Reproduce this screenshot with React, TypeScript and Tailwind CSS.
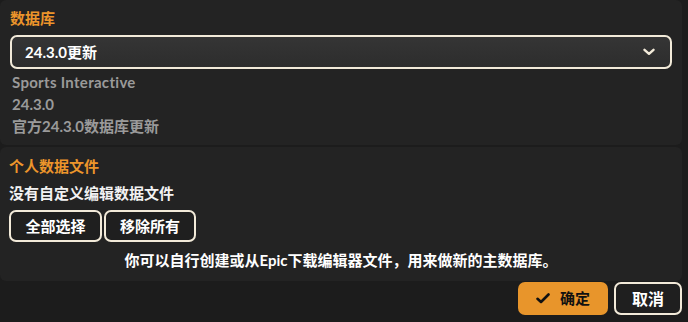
import React from "react";

const font = { fontFamily: 'Lato, "Noto Sans CJK SC", sans-serif' };

export default function App() {
  return (
    <div
      className="relative w-[688px] h-[322px] overflow-hidden bg-[#1c1c1c] flex flex-col"
      style={font}
    >
      {/* Database panel */}
      <div className="mr-[6px] h-[145px] shrink-0 rounded-[6px] bg-[#232323] px-[10px] pt-[8px]">
        <div className="text-[15px] leading-[20px] font-bold text-[#ec952b]">数据库</div>
        <div className="mt-[7px] h-[34px] rounded-[7px] border-2 border-[#f2ead9] bg-gradient-to-b from-[#353535] to-[#2d2d2d] flex items-center justify-between pl-[13px] pr-[15px]">
          <span className="text-[15px] font-bold text-white">24.3.0更新</span>
          <svg width="12" height="8" viewBox="0 0 12 8" fill="none">
            <path
              d="M1.5 1.8 L6 5.8 L10.5 1.8"
              stroke="#f2ead9"
              strokeWidth="2.4"
              strokeLinecap="round"
              strokeLinejoin="round"
            />
          </svg>
        </div>
        <div className="mt-[2px] pl-[2px] text-[15px] leading-[22px] font-bold text-[#9a9a9a]">
          <div className="tracking-[0.3px]">Sports Interactive</div>
          <div>24.3.0</div>
          <div>官方24.3.0数据库更新</div>
        </div>
      </div>

      {/* Personal files panel */}
      <div className="mt-[2px] mr-[6px] h-[134px] shrink-0 rounded-[6px] bg-[#232323] px-[9px] pt-[9px]">
        <div className="text-[15px] leading-[20px] font-bold text-[#ec952b]">个人数据文件</div>
        <div className="mt-[7px] text-[15px] leading-[20px] font-bold text-[#f2f2f2]">没有自定义编辑数据文件</div>
        <div className="mt-[7px] flex gap-[2px]">
          <button className="h-[32px] w-[93px] rounded-[7px] border-2 border-[#f2ead9] bg-[#1f1f1f] text-[15px] font-bold text-white">
            全部选择
          </button>
          <button className="h-[32px] w-[92px] rounded-[7px] border-2 border-[#f2ead9] bg-[#1f1f1f] text-[15px] font-bold text-white">
            移除所有
          </button>
        </div>
        <div className="mt-[8px] text-center text-[15px] leading-[20px] font-bold text-white">
          你可以自行创建或从Epic下载编辑器文件，用来做新的主数据库。
        </div>
      </div>

      {/* Footer buttons */}
      <div className="mt-[1px] flex justify-end gap-[6px] pr-[6px]">
        <button className="h-[33px] w-[90px] rounded-[7px] bg-[#e8952b] flex items-center justify-center gap-[10px] text-[15px] font-bold text-[#111]">
          <svg width="14" height="11" viewBox="0 0 14 11" fill="none">
            <path
              d="M1.5 5.8 L5 9 L12.5 1.5"
              stroke="#111"
              strokeWidth="2.6"
              strokeLinecap="round"
              strokeLinejoin="round"
            />
          </svg>
          <span>确定</span>
        </button>
        <button className="h-[33px] w-[68px] rounded-[7px] border-2 border-[#f2ead9] bg-[#1f1f1f] text-[16px] font-bold text-white">
          取消
        </button>
      </div>
    </div>
  );
}
